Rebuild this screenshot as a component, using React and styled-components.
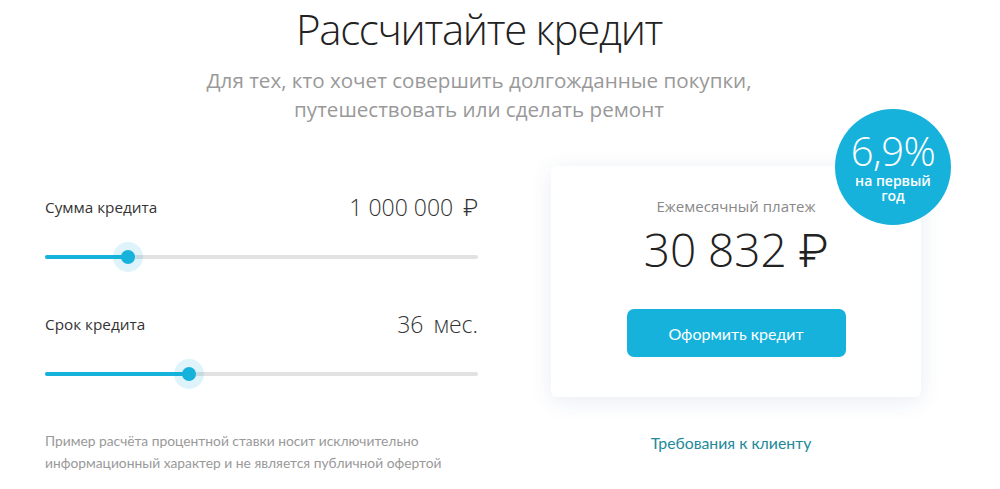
import React from "react";
import styled, { createGlobalStyle } from "styled-components";

const GlobalStyle = createGlobalStyle`
  body {
    margin: 0;
    background: #ffffff;
    font-family: "Open Sans", "Liberation Sans", sans-serif;
    color: #222;
  }
`;

const Page = styled.div`
  width: 1000px;
  height: 489px;
  overflow: hidden;
  background: #fff;
`;

const Header = styled.header`
  display: flex;
  flex-direction: column;
  align-items: center;
  padding-right: 42px;
`;

const Title = styled.h1`
  margin: 2px 0 0;
  font-size: 42px;
  font-weight: 300;
  line-height: 54px;
  color: #222;
  letter-spacing: -1.3px;
`;

const Subtitle = styled.p`
  margin: 10px 0 0;
  text-align: center;
  white-space: nowrap;
  font-size: 20.6px;
  line-height: 29px;
  color: #999;
`;

const Main = styled.main`
  display: flex;
  align-items: flex-start;
  padding: 0 0 0 45px;
  margin-top: 42px;
`;

const Controls = styled.section`
  width: 433px;
  padding-top: 26px;
`;

const Field = styled.div`
  & + & {
    margin-top: 37px;
  }
`;

const FieldHead = styled.div`
  display: flex;
  justify-content: space-between;
  align-items: center;
  height: 30px;
`;

const Label = styled.span`
  font-size: 15.3px;
  color: #333;
`;

const Value = styled.span`
  font-size: 23px;
  font-weight: 300;
  color: #333;
`;

const Unit = styled.span`
  margin-left: 10px;
`;

const Ruble = styled.span`
  font-family: Roboto, "Noto Sans", sans-serif;
  font-weight: 300;
`;

const SliderBox = styled.div`
  position: relative;
  height: 30px;
  margin-top: 20px;
  display: flex;
  align-items: center;
`;

const Track = styled.div`
  position: relative;
  width: 100%;
  height: 4px;
  border-radius: 2px;
  background: #e2e2e2;
`;

const Fill = styled.div`
  height: 100%;
  border-radius: 2px;
  background: #16b2dc;
`;

const Thumb = styled.div`
  position: absolute;
  top: 50%;
  width: 14px;
  height: 14px;
  border-radius: 50%;
  background: #16b2dc;
  transform: translate(-50%, -50%);
  box-shadow: 0 0 0 8px rgba(22, 178, 220, 0.14);
`;

const Note = styled.p`
  margin: 41px 0 0;
  font-family: Lato, "Open Sans", sans-serif;
  font-size: 13.8px;
  line-height: 22px;
  color: #999;
`;

const Aside = styled.section`
  width: 370px;
  margin-left: 73px;
  display: flex;
  flex-direction: column;
  align-items: center;
`;

const Card = styled.div`
  position: relative;
  box-sizing: border-box;
  width: 100%;
  height: 231px;
  padding: 30px 0 40px;
  border-radius: 6px;
  background: #fff;
  box-shadow: 0 4px 22px rgba(40, 70, 130, 0.1);
  display: flex;
  flex-direction: column;
  align-items: center;
`;

const CardLabel = styled.div`
  font-size: 15px;
  line-height: 20px;
  color: #888;
`;

const Amount = styled.div`
  margin-top: 5px;
  font-size: 46px;
  font-weight: 300;
  line-height: 56px;
  color: #222;
`;

const Button = styled.button`
  margin-top: 30px;
  width: 219px;
  height: 50px;
  border: none;
  border-radius: 7px;
  background: #16b2dc;
  color: #fff;
  font-family: Lato, "Open Sans", sans-serif;
  font-size: 16px;
  font-weight: 400;
  cursor: pointer;
`;

const Badge = styled.div`
  position: absolute;
  top: -57px;
  left: 284px;
  width: 116px;
  height: 116px;
  border-radius: 50%;
  background: #16b2dc;
  color: #fff;
  display: flex;
  flex-direction: column;
  align-items: center;
  justify-content: center;
`;

const Rate = styled.span`
  font-size: 40px;
  font-weight: 300;
  line-height: 40px;
  letter-spacing: -0.5px;
`;

const RateNote = styled.span`
  margin-top: 2px;
  font-size: 14px;
  font-weight: 600;
  line-height: 15px;
  text-align: center;
`;

const Link = styled.a`
  margin-top: 36px;
  margin-left: -10px;
  font-family: Lato, "Open Sans", sans-serif;
  font-size: 15.8px;
  line-height: 20px;
  color: #23899a;
  text-decoration: none;
`;

const Slider = ({ percent }) => (
  <SliderBox>
    <Track>
      <Fill style={{ width: `${percent}%` }} />
      <Thumb style={{ left: `${percent}%` }} />
    </Track>
  </SliderBox>
);

export default function App() {
  return (
    <Page>
      <GlobalStyle />
      <Header>
        <Title>Рассчитайте кредит</Title>
        <Subtitle>
          Для тех, кто хочет совершить долгожданные покупки,
          <br />
          путешествовать или сделать ремонт
        </Subtitle>
      </Header>
      <Main>
        <Controls>
          <Field>
            <FieldHead>
              <Label>Сумма кредита</Label>
              <Value>
                1 000 000
                <Unit>
                  <Ruble>₽</Ruble>
                </Unit>
              </Value>
            </FieldHead>
            <Slider percent={19.2} />
          </Field>
          <Field>
            <FieldHead>
              <Label>Срок кредита</Label>
              <Value>
                36<Unit>мес.</Unit>
              </Value>
            </FieldHead>
            <Slider percent={33.3} />
          </Field>
          <Note>
            Пример расчёта процентной ставки носит исключительно
            <br />
            информационный характер и не является публичной офертой
          </Note>
        </Controls>
        <Aside>
          <Card>
            <CardLabel>Ежемесячный платеж</CardLabel>
            <Amount>
              30 832 <Ruble>₽</Ruble>
            </Amount>
            <Button>Оформить кредит</Button>
            <Badge>
              <Rate>6,9%</Rate>
              <RateNote>
                на первый
                <br />
                год
              </RateNote>
            </Badge>
          </Card>
          <Link href="#">Требования к клиенту</Link>
        </Aside>
      </Main>
    </Page>
  );
}
